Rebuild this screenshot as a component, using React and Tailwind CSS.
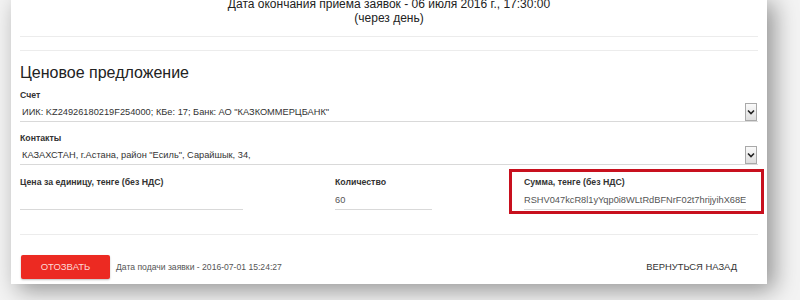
import React from 'react';

const SelectBox = ({ value }) => (
  <div className="flex h-[20px] items-center justify-between border-b border-[#d9d9d9]">
    <span className="pl-[2px] pt-[3px] text-[9.25px] text-[#333]">{value}</span>
    <span className="mr-[1px] flex h-[18px] w-[12px] items-center justify-center border border-[#a9a9a9] bg-gradient-to-b from-[#fafafa] to-[#dedede]">
      <svg width="8" height="6" viewBox="0 0 8 6" fill="none">
        <path d="M1 1.5l3 3 3-3" stroke="#222" strokeWidth="1.6" />
      </svg>
    </span>
  </div>
);

const App = () => {
  return (
    <div className="h-[300px] w-[800px] overflow-hidden bg-[#f3f3f3] font-['Liberation_Sans',Arial,sans-serif] text-[#333]">
      <div className="-mt-[3px] ml-[11px] w-[756px] bg-white px-[9px] pb-[5px] shadow-[7px_6px_22px_rgba(0,0,0,0.4)]">
        {/* Deadline */}
        <div className="text-center text-[12px] leading-[14px] text-[#222]">
          <div>Дата окончания приема заявок - 06 июля 2016 г., 17:30:00</div>
          <div>(через день)</div>
        </div>
        <div className="mt-[11px] border-t border-[#ececec]" />
        <div className="mt-[13px] border-t border-[#ececec]" />

        <h2 className="mt-[11px] text-[16px] leading-[22px] text-[#222]">Ценовое предложение</h2>

        <div className="mt-[5px] text-[8.75px] font-bold leading-[12px]">Счет</div>
        <div className="mt-[1px]">
          <SelectBox value={'ИИК: KZ24926180219F254000; КБе: 17; Банк: АО "КАЗКОММЕРЦБАНК"'} />
        </div>

        <div className="mt-[10px] text-[8.75px] font-bold leading-[12px]">Контакты</div>
        <div className="mt-[1px]">
          <SelectBox value={'КАЗАХСТАН, г.Астана, район "Есиль", Сарайшык, 34,'} />
        </div>

        {/* Price row */}
        <div className="mt-[4px] flex items-start">
          <div className="w-[223px] pt-[7px]">
            <div className="text-[8.75px] font-bold leading-[12px]">Цена за единицу, тенге (без НДС)</div>
            <div className="mt-[1px] h-[21px] border-b border-[#d9d9d9]" />
          </div>
          <div className="ml-[92px] w-[97px] pt-[7px]">
            <div className="text-[8.75px] font-bold leading-[12px]">Количество</div>
            <div className="mt-[1px] h-[21px] border-b border-[#d9d9d9] pt-[1px] text-[9.25px] leading-[20px] text-[#555]">60</div>
          </div>
          <div className="-mr-[6px] ml-[77px] w-[255px] border-[3px] border-[#c8101e] pb-[1px] pl-[12px] pr-[15px] pt-[4px]">
            <div className="text-[8.75px] font-bold leading-[12px]">Сумма, тенге (без НДС)</div>
            <div className="mt-[1px] h-[21px] overflow-hidden whitespace-nowrap border-b border-[#d9d9d9] pt-[2px] text-[9.25px] leading-[18px] text-[#555]">
              RSHV047kcR8l1yYqp0i8WLtRdBFNrF02t7hrijyihX68E
            </div>
          </div>
        </div>

        <div className="mt-[20px] border-t border-[#ececec]" />

        {/* Actions */}
        <div className="mt-[20px] flex items-center">
          <button className="ml-[1px] h-[24px] w-[89px] rounded-[2px] bg-[#ec2a22] text-[9.5px] text-[#fcd9d4] shadow-[0_1px_2px_rgba(0,0,0,0.25)]">
            ОТОЗВАТЬ
          </button>
          <span className="ml-[6px] text-[8.6px] text-[#555]">Дата подачи заявки - 2016-07-01 15:24:27</span>
          <span className="ml-auto mr-[21px] text-[9.4px] text-[#333]">ВЕРНУТЬСЯ НАЗАД</span>
        </div>
      </div>
    </div>
  );
};

export default App;
